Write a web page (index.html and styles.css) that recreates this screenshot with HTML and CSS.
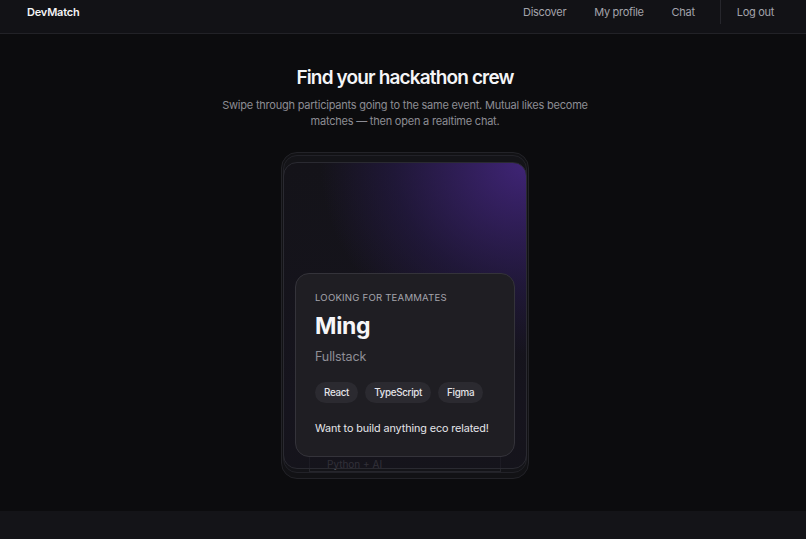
FILE: index.html
```
<!DOCTYPE html>
<html lang="en">
<head>
    <meta charset="UTF-8">
    <meta name="viewport" content="width=device-width, initial-scale=1.0">
    <title>DevMatch</title>
    <link rel="stylesheet" href="styles.css">
</head>
<body>

<header class="topbar">
    <div class="topbar-row">
        <span class="brand">DevMatch</span>
        <nav class="nav-links">
            <a href="#">Discover</a>
            <a href="#">My profile</a>
            <a href="#">Chat</a>
            <span class="nav-sep"><a href="#">Log out</a></span>
        </nav>
    </div>
</header>

<main class="main">
    <h1>Find your hackathon crew</h1>
    <p class="lead">Swipe through participants going to the same event. Mutual likes become matches — then open a realtime chat.</p>

    <!-- Card stack -->
    <div class="deck">
        <div class="card card-back">
            <div class="panel-back">
                <span class="back-role">Python + AI</span>
            </div>
        </div>
        <div class="card card-front">
            <div class="panel">
                <div class="eyebrow">LOOKING FOR TEAMMATES</div>
                <div class="name">Ming</div>
                <div class="role">Fullstack</div>
                <div class="tags">
                    <span class="tag">React</span>
                    <span class="tag">TypeScript</span>
                    <span class="tag">Figma</span>
                </div>
                <p class="bio">Want to build anything eco related!</p>
            </div>
        </div>
    </div>
</main>

<footer class="foot"></footer>

</body>
</html>
```

FILE: styles.css
```
/* General */
* {
    margin: 0;
    padding: 0;
    box-sizing: border-box;
}
body {
    font-family: Inter, "Noto Sans", Arial, sans-serif;
    background-color: #0c0c0e;
    color: #f2f2f4;
    min-height: 100vh;
    display: flex;
    flex-direction: column;
}
a {
    color: inherit;
    text-decoration: none;
}

/* Top bar */
.topbar {
    height: 34px;
    background-color: #121216;
    border-bottom: 1px solid #222227;
    padding: 0 32px 0 27px;
}
.topbar-row {
    height: 24px;
    display: flex;
    align-items: center;
    justify-content: space-between;
}
.brand {
    font-size: 11px;
    font-weight: 600;
    letter-spacing: -0.2px;
    color: #f4f4f6;
}
.nav-links {
    display: flex;
    align-items: center;
    height: 100%;
    gap: 28px;
    font-size: 11px;
    letter-spacing: -0.3px;
    color: #a3a3ab;
}
.nav-sep {
    height: 100%;
    display: flex;
    align-items: center;
    border-left: 1px solid #26262c;
    padding-left: 16px;
    margin-left: -3px;
}

/* Hero */
.main {
    padding: 32px 0 32px 4px;
    text-align: center;
}
h1 {
    font-size: 19px;
    line-height: 24px;
    font-weight: 600;
    color: #f5f5f7;
    letter-spacing: -0.85px;
}
.lead {
    width: 380px;
    margin: 7px auto 0;
    font-size: 11px;
    line-height: 16px;
    letter-spacing: -0.22px;
    color: #8c8c94;
}

/* Card stack */
.deck {
    position: relative;
    width: 248px;
    height: 327px;
    margin: 23px auto 0;
    padding: 9px 1px;
    border: 1px solid #232328;
    border-radius: 16px;
    background-color: #121215;
    text-align: left;
}
.card {
    border-radius: 14px;
    border: 1px solid #2a2a31;
}
.card-back {
    position: absolute;
    left: 1px;
    right: 1px;
    top: 2px;
    bottom: 5px;
    background-color: #141418;
    border-color: #222228;
}
.panel-back {
    position: absolute;
    left: 25px;
    right: 25px;
    bottom: 0;
    height: 40px;
    border: 1px solid #26262c;
    border-top: none;
    padding: 0 0 0 17px;
    display: flex;
    align-items: flex-end;
}
.back-role {
    font-size: 10px;
    color: #55555c;
    line-height: 14px;
}
.card-front {
    position: relative;
    height: 307px;
    padding: 110px 11px 12px 11px;
    background:
        radial-gradient(ellipse 100% 74% at 100% 0%, rgba(68, 38, 128, 0.9), rgba(42, 27, 84, 0.5) 55%, rgba(20, 20, 24, 0) 85%),
        linear-gradient(180deg, rgba(20, 19, 25, 0.92) 0%, rgba(22, 20, 30, 0.88) 80%, rgba(22, 20, 30, 0.55) 100%);
}
.panel {
    height: 184px;
    padding: 18px 19px 0;
    background-color: #1f1e23;
    border: 1px solid #34333a;
    border-radius: 14px;
}
.eyebrow {
    font-size: 9.6px;
    line-height: 12px;
    letter-spacing: 0.2px;
    color: #a4a4ac;
}
.name {
    margin-top: 8px;
    font-size: 23px;
    line-height: 28px;
    font-weight: 700;
    letter-spacing: -0.3px;
    color: #f6f6f8;
}
.role {
    margin-top: 9px;
    font-size: 12.5px;
    line-height: 16px;
    letter-spacing: -0.1px;
    color: #8f8f97;
}
.tags {
    display: flex;
    gap: 7px;
    margin-top: 17px;
}
.tag {
    height: 21px;
    padding: 0 9px;
    display: flex;
    align-items: center;
    border-radius: 11px;
    background-color: #2b2a30;
    font-size: 9.8px;
    font-weight: 500;
    letter-spacing: -0.3px;
    color: #e4e4e8;
}
.bio {
    margin-top: 19px;
    font-size: 10.8px;
    line-height: 14px;
    letter-spacing: -0.1px;
    color: #e6e6ea;
    white-space: nowrap;
}

/* Bottom band */
.foot {
    flex: 1;
    min-height: 28px;
    background-color: #141418;
}
```
